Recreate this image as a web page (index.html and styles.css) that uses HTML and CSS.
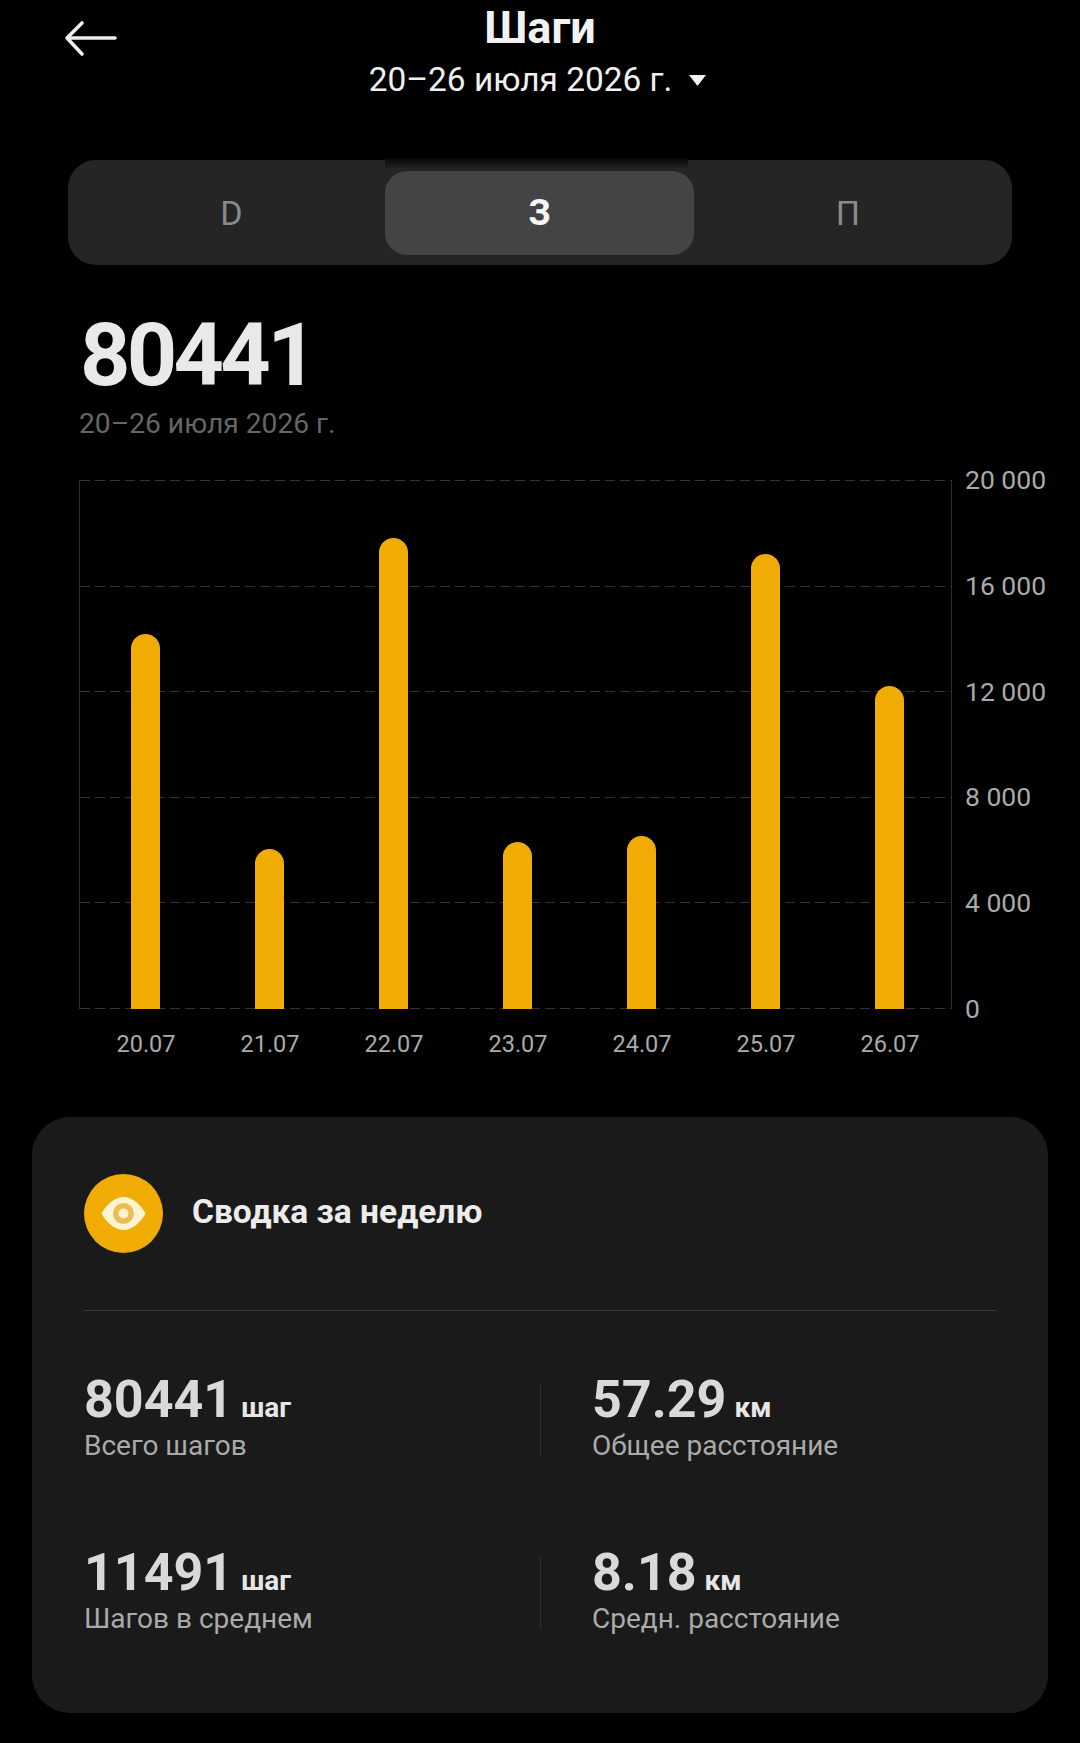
FILE: index.html
```html
<!DOCTYPE html>
<html lang="ru">
<head>
<meta charset="utf-8">
<title>Шаги</title>
<link rel="stylesheet" href="styles.css">
</head>
<body>
<div class="page">
  <header class="header">
    <svg class="back" width="54" height="40" viewBox="0 0 54 40"><path d="M3 19H51M3 19L18 4M3 19L18 35" fill="none" stroke="#eee" stroke-width="3.6" stroke-linecap="round" stroke-linejoin="round"/></svg>
    <h1 class="title">Шаги</h1>
    <div class="range">20–26 июля 2026 г.<svg class="caret" width="19" height="13" viewBox="0 0 19 13"><path d="M1 1H18L9.5 12Z" fill="#f2f2f2"/></svg></div>
  </header>

  <div class="tabs-wrap">
    <div class="tabs">
      <div class="tab tab-first">D</div>
      <div class="tab tab-active">З</div>
      <div class="tab tab-last">П</div>
    </div>
  </div>

  <section class="total">
    <div class="total-value">80441</div>
    <div class="total-date">20–26 июля 2026 г.</div>
  </section>

  <section class="chart">
    <div class="plot">
      <div class="grid">
        <div class="line"></div><div class="line"></div><div class="line"></div><div class="line"></div><div class="line"></div><div class="line"></div>
      </div>
      <div class="bars">
        <div class="bar" style="height:375px"></div>
        <div class="bar" style="height:160px"></div>
        <div class="bar" style="height:471px"></div>
        <div class="bar" style="height:167px"></div>
        <div class="bar" style="height:173px"></div>
        <div class="bar" style="height:455px"></div>
        <div class="bar" style="height:323px"></div>
      </div>
    </div>
    <div class="y-axis">
      <span>20 000</span><span>16 000</span><span>12 000</span><span>8 000</span><span>4 000</span><span>0</span>
    </div>
    <div class="x-axis">
      <span>20.07</span><span>21.07</span><span>22.07</span><span>23.07</span><span>24.07</span><span>25.07</span><span>26.07</span>
    </div>
  </section>

  <section class="card">
    <div class="card-head">
      <svg class="eye" width="79" height="79" viewBox="0 0 79 79">
        <circle cx="39.5" cy="39.5" r="39.5" fill="#f0ac04"/>
        <path d="M17.5 39.5C23 29 32 23 39.5 23C47 23 56 29 61.5 39.5C56 50 47 56 39.5 56C32 56 23 50 17.5 39.5Z" fill="#fff4d2"/>
        <circle cx="39.5" cy="39.5" r="10.5" fill="#ebbd57"/>
        <circle cx="39.5" cy="39.5" r="5" fill="#fff4d2"/>
      </svg>
      <h2 class="card-title">Сводка за неделю</h2>
    </div>
    <div class="stats">
      <div class="stat stat-left">
        <div class="stat-line"><span class="num">80441</span><span class="unit">шаг</span></div>
        <div class="label">Всего шагов</div>
      </div>
      <div class="stat">
        <div class="stat-line"><span class="num">57.29</span><span class="unit">км</span></div>
        <div class="label">Общее расстояние</div>
      </div>
      <div class="stat stat-left">
        <div class="stat-line"><span class="num">11491</span><span class="unit">шаг</span></div>
        <div class="label">Шагов в среднем</div>
      </div>
      <div class="stat">
        <div class="stat-line"><span class="num">8.18</span><span class="unit">км</span></div>
        <div class="label">Средн. расстояние</div>
      </div>
    </div>
  </section>
</div>
</body>
</html>
```
FILE: styles.css
```css
* { box-sizing: border-box; }
html, body { margin: 0; background: #000; }
body { font-family: Roboto, "Noto Sans", sans-serif; color: #eee; }
.page { width: 1080px; height: 1743px; overflow: hidden; }

.header { height: 160px; display: flex; flex-direction: column; align-items: center; position: relative; }
.back { position: absolute; left: 64px; top: 19px; }
.title { margin: 6px 0 0; font-size: 45px; line-height: 44px; font-weight: 700; color: #f2f2f2; }
.range { margin: 8px 4px 0 0; font-size: 33.4px; line-height: 44px; color: #f0f0f0; display: flex; align-items: center; }
.caret { margin-left: 16px; }

.tabs-wrap { padding: 0 68px; }
.tabs { height: 105px; border-radius: 28px; background: #252525; display: grid; grid-template-columns: 317px 309px 1fr; padding: 11px 0 10px; }
.tab { display: flex; align-items: center; justify-content: center; font-size: 34px; color: #8a8a8a; border-radius: 22px; }
.tab-first { padding-left: 10px; }
.tab-last { padding-right: 10px; }
.tab-active { position: relative; background: #444; color: #f6f6f6; font-size: 36px; font-weight: 700; }
.tab-active::before { content: ""; position: absolute; left: 0; right: 6px; top: -13px; height: 10px; background: linear-gradient(#080808, #1f1f1f); }

.total { padding: 46px 0 0 79px; }
.total-value { margin-left: 1px; font-size: 88px; line-height: 88px; font-weight: 700; letter-spacing: -3.7px; color: #e9e9e9; }
.total-date { margin-top: 9px; font-size: 28.2px; line-height: 32px; color: #666; }

.chart { margin: 40px 0 0 79px; display: grid; grid-template-columns: 873px 1fr; grid-template-rows: 529px auto; }
.plot { display: grid; border-left: 1px solid #2e2e2e; border-right: 1px solid #2e2e2e; }
.grid { grid-area: 1 / 1; display: flex; flex-direction: column; justify-content: space-between; }
.line { height: 1px; background: repeating-linear-gradient(90deg, #333 0 10px, transparent 10px 15px); }
.bars { grid-area: 1 / 1; display: flex; align-items: flex-end; padding-left: 51px; gap: 95px; }
.bar { width: 29px; background: #f0ac04; border-radius: 14.5px 14.5px 0 0; }
.y-axis { display: flex; flex-direction: column; justify-content: space-between; margin: -15px 0 -15px 13px; font-size: 26.5px; line-height: 30px; color: #aaa; }
.x-axis { display: flex; padding: 21px 0 0 5px; font-size: 23.5px; line-height: 28px; color: #aaa; }
.x-axis span { flex: none; width: 124px; text-align: center; }

.card { margin: 59px 32px 0; height: 596px; border-radius: 38px; background: #1a1a1a; padding: 57px 52px 0; }
.card-head { display: flex; align-items: center; gap: 29px; padding-bottom: 57px; border-bottom: 1px solid #3a3a3a; }
.card-title { margin: 0 0 3px; font-size: 33.5px; line-height: 40px; font-weight: 700; color: #ececec; }
.stats { display: grid; grid-template-columns: 457px 1fr; row-gap: 100px; padding-top: 72px; }
.stat { height: 73px; }
.stat:nth-child(even) { padding-left: 51px; }
.stat-left { border-right: 1px solid #2e2e2e; }
.stat-line { display: flex; align-items: baseline; gap: 8px; height: 44px; margin-top: -5px; line-height: 44px; }
.num { font-size: 52px; font-weight: 700; color: #d9d9d9; }
.unit { font-size: 28px; font-weight: 700; color: #e6e6e6; }
.label { margin-top: 8px; font-size: 28px; line-height: 32px; color: #aaa; }
```
